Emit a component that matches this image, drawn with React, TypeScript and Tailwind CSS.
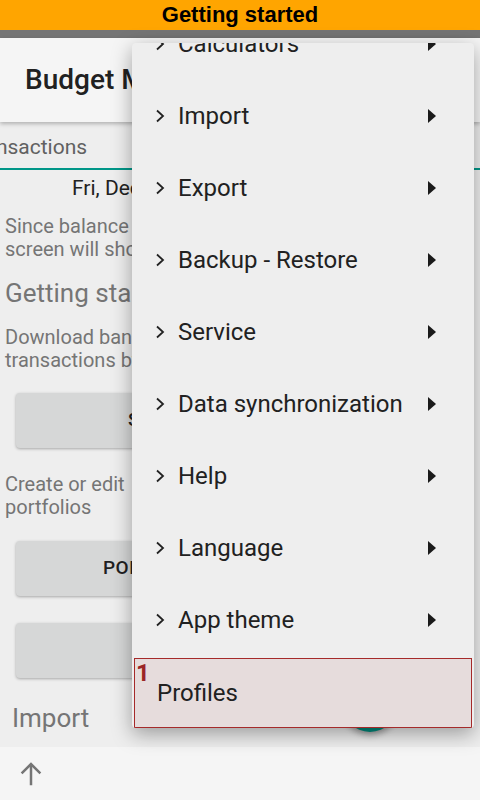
import React from 'react';

const menuItems = [
  'Calculators',
  'Import',
  'Export',
  'Backup - Restore',
  'Service',
  'Data synchronization',
  'Help',
  'Language',
  'App theme',
];

const Chevron: React.FC = () => (
  <svg width="10" height="14" viewBox="0 0 10 14" className="shrink-0">
    <polyline points="2,1.5 8,7 2,12.5" fill="none" stroke="#222" strokeWidth="1.8" />
  </svg>
);

const Arrow: React.FC = () => (
  <svg width="10" height="16" viewBox="0 0 10 16" className="shrink-0">
    <polygon points="1,1 9,8 1,15" fill="#1a1a1a" />
  </svg>
);

const GrayButton: React.FC<{ label: string; pad: string }> = ({ label, pad }) => (
  <div
    className={`mx-4 h-[55px] rounded bg-[#d6d7d7] shadow-[0_1px_3px_rgba(0,0,0,0.3)] flex items-center ${pad} text-[19px] font-medium tracking-wide text-[#1f1f1f] whitespace-nowrap overflow-hidden`}
  >
    {label}
  </div>
);

export default function App() {
  return (
    <div
      className="relative w-[480px] h-[800px] overflow-hidden bg-[#eeeeee] flex flex-col"
      style={{ fontFamily: 'Roboto, "Noto Sans", sans-serif' }}
    >
      {/* tutorial banner */}
      <div
        className="h-[30px] bg-[#ffa500] flex items-center justify-center text-[22px] font-bold text-black leading-none"
        style={{ fontFamily: '"Liberation Sans", Arial, sans-serif' }}
      >
        Getting started
      </div>
      <div className="h-[8px] bg-[#757575]" />

      {/* app bar */}
      <div className="h-[84px] bg-[#f5f5f5] flex items-center pl-[25px] shadow-[0_2px_4px_rgba(0,0,0,0.25)] z-10">
        <span className="text-[28px] font-medium text-[#212121] whitespace-nowrap">Budget Manager</span>
      </div>

      {/* tabs */}
      <div className="h-[48px] flex flex-col">
        <div className="flex-1 flex items-center pt-[6px] overflow-hidden">
          <span className="ml-[-34px] text-[21px] text-[#616161] whitespace-nowrap">Transactions</span>
        </div>
        <div className="h-[2px] bg-[#009688]" />
      </div>

      {/* content */}
      <div className="flex-1 flex flex-col">
        <div className="pl-[72px] pt-[3px] h-[34px] text-[21px] text-[#212121] whitespace-nowrap">Fri, Dec 1, 2023</div>
        <div className="px-[5px] mt-[11px] text-[20px] leading-[23px] text-[#757575] whitespace-nowrap">
          Since balance is not set, the<br />screen will show zero amounts
        </div>
        <div className="px-[5px] mt-[17px] text-[26px] leading-[30px] text-[#757575] whitespace-nowrap">Getting started</div>
        <div className="px-[5px] mt-[18px] text-[20px] leading-[23px] text-[#757575] whitespace-nowrap">
          Download bank<br />transactions by files
        </div>
        <div className="mt-[21px]">
          <GrayButton label="SET UP IMPORT" pad="pl-[112px]" />
        </div>
        <div className="px-[5px] mt-[25px] text-[20px] leading-[23px] text-[#757575]">
          Create or edit<br />portfolios
        </div>
        <div className="mt-[22px]">
          <GrayButton label="PORTFOLIOS" pad="pl-[87px]" />
        </div>
        <div className="mt-[27px]">
          <GrayButton label="" pad="" />
        </div>
        <div className="pl-[12px] mt-[25px] text-[26px] leading-[30px] text-[#757575]">Import</div>
      </div>

      {/* bottom bar */}
      <div className="h-[53px] bg-[#f5f5f5] flex items-center pl-[16px]">
        <svg width="30" height="30" viewBox="0 0 24 24" fill="none" stroke="#757575" strokeWidth="2">
          <path d="M12 21V4" />
          <path d="M4.5 11.5L12 4l7.5 7.5" />
        </svg>
      </div>

      {/* FAB under menu */}
      <div className="absolute left-[342px] top-[676px] w-[56px] h-[56px] rounded-full bg-[#00897b] shadow-[0_3px_6px_rgba(0,0,0,0.35)]" />

      {/* overflow menu */}
      <div className="absolute z-20 left-[132px] top-[43px] w-[342px] h-[685px] rounded bg-[#eeeeee] overflow-hidden shadow-[0_6px_20px_rgba(0,0,0,0.35)]">
        <div className="mt-[-35px] flex flex-col">
          {menuItems.map((item) => (
            <div key={item} className="h-[72px] flex items-center pl-[23px] pr-[37px]">
              <Chevron />
              <span className="ml-[13px] flex-1 text-[24px] text-[#212121] whitespace-nowrap">{item}</span>
              <Arrow />
            </div>
          ))}
          <div className="relative mx-[2px] mt-[2px] h-[70px] border border-[#a52a2a] bg-[#e6dcdc] flex items-center pl-[22px]">
            <span className="absolute left-[1px] top-[2px] text-[24px] font-bold leading-none text-[#9b2626]">1</span>
            <span className="text-[24px] text-[#212121]">Profiles</span>
          </div>
        </div>
      </div>
    </div>
  );
}
